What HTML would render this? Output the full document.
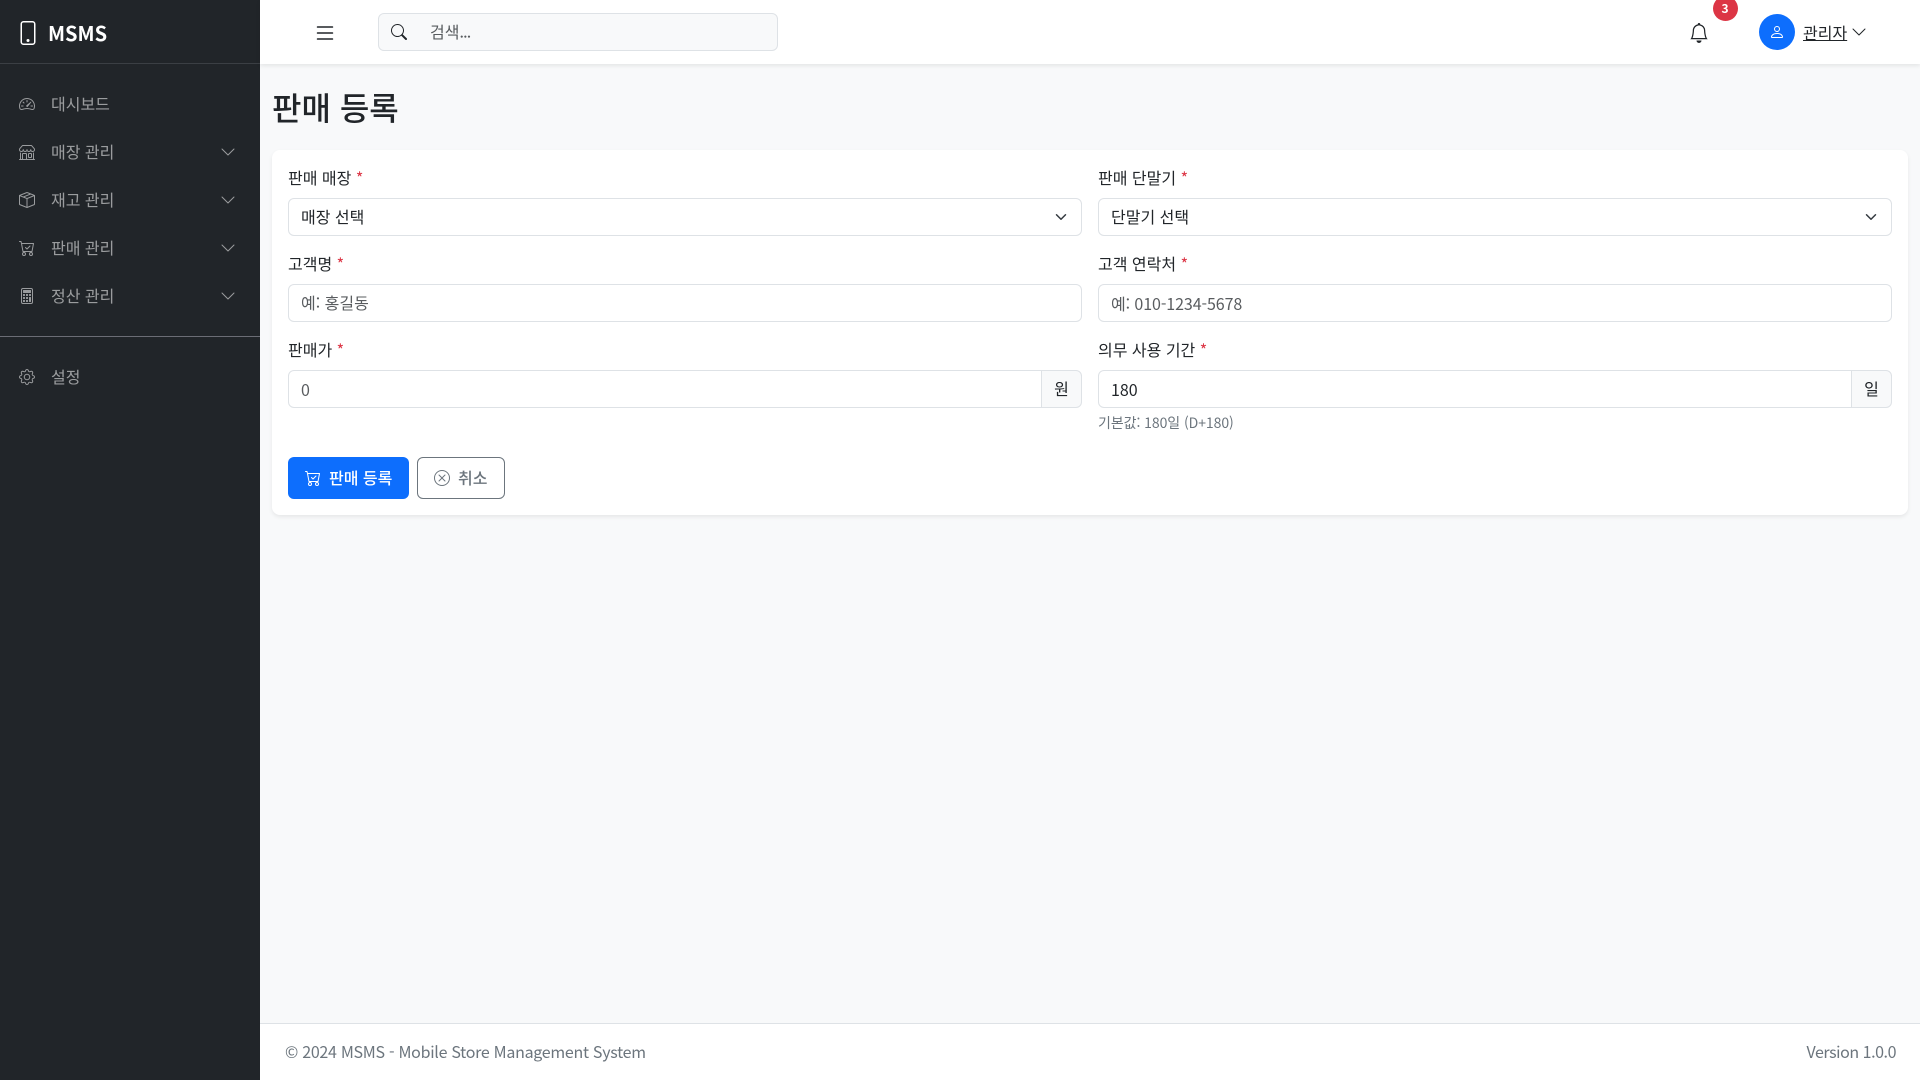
<!DOCTYPE html>
<html lang="ko"><head><meta charset="utf-8"><title>판매 등록</title>
<style>
*{box-sizing:border-box;margin:0;padding:0}
html,body{width:1920px;height:1080px;overflow:hidden}
body{position:relative;background:#f8f9fa;font-family:"Liberation Sans","Noto Sans CJK KR",sans-serif;font-size:16px;color:#212529}
.a{position:absolute;white-space:nowrap;line-height:24px}
.k{font-family:"Noto Sans CJK KR",sans-serif}
svg{position:absolute;display:block;fill:currentColor}
#side{position:absolute;left:0;top:0;width:260px;height:1080px;background:#212529}
#head{position:absolute;left:260px;top:0;width:1660px;height:64px;background:#fff;box-shadow:0 2px 4px rgba(0,0,0,.08)}
#card{position:absolute;left:272px;top:150px;width:1636px;height:365px;background:#fff;border-radius:8px;box-shadow:0 2px 4px rgba(0,0,0,.075)}
#foot{position:absolute;left:260px;top:1023px;width:1660px;height:57px;background:#fff;border-top:1px solid #dee2e6}
.nav{color:rgba(255,255,255,.55)}
.inp{position:absolute;height:38px;background:#fff;border:1px solid #dee2e6;border-radius:6px}
.add{position:absolute;height:38px;width:41px;background:#f8f9fa;border:1px solid #dee2e6;border-radius:0 6px 6px 0;text-align:center;line-height:35px}
.ph{color:rgba(33,37,41,.75)}
.req{color:#dc3545}
</style></head><body>
<svg width="0" height="0" style="position:absolute"><defs>
<symbol id="chev" viewBox="0 0 16 16"><path fill-rule="evenodd" d="M1.646 4.646a.5.5 0 0 1 .708 0L8 10.293l5.646-5.647a.5.5 0 0 1 .708.708l-6 6a.5.5 0 0 1-.708 0l-6-6a.5.5 0 0 1 0-.708"/></symbol>
<symbol id="cart" viewBox="0 0 16 16"><path d="M11.354 6.354a.5.5 0 0 0-.708-.708L8 8.293 6.854 7.146a.5.5 0 1 0-.708.708l1.5 1.5a.5.5 0 0 0 .708 0z"/><path d="M.5 1a.5.5 0 0 0 0 1h1.11l.401 1.607 1.498 7.985A.5.5 0 0 0 4 12h1a2 2 0 1 0 0 4 2 2 0 0 0 0-4h7a2 2 0 1 0 0 4 2 2 0 0 0 0-4h1a.5.5 0 0 0 .491-.408l1.5-8A.5.5 0 0 0 14.5 3H2.89l-.405-1.621A.5.5 0 0 0 2 1zm3.915 10L3.102 4h10.796l-1.313 7zM6 14a1 1 0 1 1-2 0 1 1 0 0 1 2 0m7 0a1 1 0 1 1-2 0 1 1 0 0 1 2 0"/></symbol>
</defs></svg>

<div id="side">
<div style="position:absolute;left:0;top:63px;width:260px;height:1px;background:#3b3f44"></div>
<svg style="left:16px;top:21px;color:#fff" width="24" height="24" viewBox="0 0 16 16"><path d="M11 1a1 1 0 0 1 1 1v12a1 1 0 0 1-1 1H5a1 1 0 0 1-1-1V2a1 1 0 0 1 1-1zM5 0a2 2 0 0 0-2 2v12a2 2 0 0 0 2 2h6a2 2 0 0 0 2-2V2a2 2 0 0 0-2-2z"/><path d="M8 14a1 1 0 1 0 0-2 1 1 0 0 0 0 2"/></svg>
<div class="a k" style="left:48px;top:21px;font-size:20px;font-weight:700;color:#fff">MSMS</div>

<svg class="nav" style="left:19px;top:96px" width="16" height="16" viewBox="0 0 16 16"><path d="M8 4a.5.5 0 0 1 .5.5V6a.5.5 0 0 1-1 0V4.5A.5.5 0 0 1 8 4M3.732 5.732a.5.5 0 0 1 .707 0l.915.914a.5.5 0 1 1-.708.708l-.914-.915a.5.5 0 0 1 0-.707M2 10a.5.5 0 0 1 .5-.5h1.586a.5.5 0 0 1 0 1H2.5A.5.5 0 0 1 2 10m9.5 0a.5.5 0 0 1 .5-.5h1.5a.5.5 0 0 1 0 1H12a.5.5 0 0 1-.5-.5m.754-4.246a.39.39 0 0 0-.527-.02L7.547 9.31a.91.91 0 1 0 1.302 1.258l3.434-4.297a.39.39 0 0 0-.029-.518z"/><path fill-rule="evenodd" d="M0 10a8 8 0 1 1 15.547 2.661c-.442 1.253-1.845 1.602-2.932 1.25C11.309 13.488 9.475 13 8 13c-1.474 0-3.31.488-4.615.911-1.087.352-2.49.003-2.932-1.25A8 8 0 0 1 0 10m8-7a7 7 0 0 0-6.603 9.329c.203.575.923.876 1.68.63C4.397 12.533 6.358 12 8 12s3.604.532 4.923.96c.757.245 1.477-.056 1.68-.631A7 7 0 0 0 8 3"/></svg>
<div class="a k nav" style="left:51px;top:91px">대시보드</div>

<svg class="nav" style="left:19px;top:144px" width="16" height="16" viewBox="0 0 16 16"><path d="M2.97 1.35A1 1 0 0 1 3.73 1h8.54a1 1 0 0 1 .76.35l2.609 3.044A1.5 1.5 0 0 1 16 5.37v.255a2.375 2.375 0 0 1-4.25 1.458A2.37 2.37 0 0 1 9.875 8 2.37 2.37 0 0 1 8 7.083 2.37 2.37 0 0 1 6.125 8a2.37 2.37 0 0 1-1.875-.917A2.375 2.375 0 0 1 0 5.625V5.37a1.5 1.5 0 0 1 .361-.976zm1.78 4.275a1.375 1.375 0 0 0 2.75 0 .5.5 0 0 1 1 0 1.375 1.375 0 0 0 2.75 0 .5.5 0 0 1 1 0 1.375 1.375 0 1 0 2.75 0V5.37a.5.5 0 0 0-.12-.325L12.27 2H3.73L1.12 5.045A.5.5 0 0 0 1 5.37v.255a1.375 1.375 0 0 0 2.75 0 .5.5 0 0 1 1 0M1.5 8.5A.5.5 0 0 1 2 9v6h1v-5a1 1 0 0 1 1-1h3a1 1 0 0 1 1 1v5h6V9a.5.5 0 0 1 1 0v6h.5a.5.5 0 0 1 0 1H.5a.5.5 0 0 1 0-1H1V9a.5.5 0 0 1 .5-.5M4 15h3v-5H4zm5-5a1 1 0 0 1 1-1h2a1 1 0 0 1 1 1v3a1 1 0 0 1-1 1h-2a1 1 0 0 1-1-1zm3 0h-2v3h2z"/></svg>
<div class="a k nav" style="left:51px;top:139px">매장 관리</div>
<svg class="nav" style="left:220px;top:144px" width="16" height="16"><use href="#chev"/></svg>

<svg class="nav" style="left:19px;top:192px" width="16" height="16" viewBox="0 0 16 16"><path d="M8.186 1.113a.5.5 0 0 0-.372 0L1.846 3.5l2.404.961L10.404 2zm3.564 1.426L5.596 5 8 5.961 14.154 3.5zm3.25 1.7-6.5 2.6v7.922l6.5-2.6V4.24zM7.5 14.762V6.838L1 4.239v7.925zM7.443.184a1.5 1.5 0 0 1 1.114 0l7.129 2.852A.5.5 0 0 1 16 3.5v8.662a1 1 0 0 1-.629.928l-7.185 2.874a.5.5 0 0 1-.372 0L.63 13.09a1 1 0 0 1-.63-.928V3.5a.5.5 0 0 1 .314-.464z"/></svg>
<div class="a k nav" style="left:51px;top:187px">재고 관리</div>
<svg class="nav" style="left:220px;top:192px" width="16" height="16"><use href="#chev"/></svg>

<svg class="nav" style="left:19px;top:240px" width="16" height="16"><use href="#cart"/></svg>
<div class="a k nav" style="left:51px;top:235px">판매 관리</div>
<svg class="nav" style="left:220px;top:240px" width="16" height="16"><use href="#chev"/></svg>

<svg class="nav" style="left:19px;top:288px" width="16" height="16" viewBox="0 0 16 16"><path d="M12 1a1 1 0 0 1 1 1v12a1 1 0 0 1-1 1H4a1 1 0 0 1-1-1V2a1 1 0 0 1 1-1zM4 0a2 2 0 0 0-2 2v12a2 2 0 0 0 2 2h8a2 2 0 0 0 2-2V2a2 2 0 0 0-2-2z"/><path d="M4 2.5a.5.5 0 0 1 .5-.5h7a.5.5 0 0 1 .5.5v2a.5.5 0 0 1-.5.5h-7a.5.5 0 0 1-.5-.5zm0 4a.5.5 0 0 1 .5-.5h1a.5.5 0 0 1 .5.5v1a.5.5 0 0 1-.5.5h-1a.5.5 0 0 1-.5-.5zm0 3a.5.5 0 0 1 .5-.5h1a.5.5 0 0 1 .5.5v1a.5.5 0 0 1-.5.5h-1a.5.5 0 0 1-.5-.5zm0 3a.5.5 0 0 1 .5-.5h1a.5.5 0 0 1 .5.5v1a.5.5 0 0 1-.5.5h-1a.5.5 0 0 1-.5-.5zm3-6a.5.5 0 0 1 .5-.5h1a.5.5 0 0 1 .5.5v1a.5.5 0 0 1-.5.5h-1a.5.5 0 0 1-.5-.5zm0 3a.5.5 0 0 1 .5-.5h1a.5.5 0 0 1 .5.5v1a.5.5 0 0 1-.5.5h-1a.5.5 0 0 1-.5-.5zm0 3a.5.5 0 0 1 .5-.5h1a.5.5 0 0 1 .5.5v1a.5.5 0 0 1-.5.5h-1a.5.5 0 0 1-.5-.5zm3-6a.5.5 0 0 1 .5-.5h1a.5.5 0 0 1 .5.5v1a.5.5 0 0 1-.5.5h-1a.5.5 0 0 1-.5-.5zm0 3a.5.5 0 0 1 .5-.5h1a.5.5 0 0 1 .5.5v4a.5.5 0 0 1-.5.5h-1a.5.5 0 0 1-.5-.5z"/></svg>
<div class="a k nav" style="left:51px;top:283px">정산 관리</div>
<svg class="nav" style="left:220px;top:288px" width="16" height="16"><use href="#chev"/></svg>

<div style="position:absolute;left:0;top:336px;width:260px;height:1px;background:#6b6d75"></div>

<svg class="nav" style="left:19px;top:369px" width="16" height="16" viewBox="0 0 16 16"><path d="M8 4.754a3.246 3.246 0 1 0 0 6.492 3.246 3.246 0 0 0 0-6.492M5.754 8a2.246 2.246 0 1 1 4.492 0 2.246 2.246 0 0 1-4.492 0"/><path d="M9.796 1.343c-.527-1.79-3.065-1.79-3.592 0l-.094.319a.873.873 0 0 1-1.255.52l-.292-.16c-1.64-.892-3.433.902-2.54 2.541l.159.292a.873.873 0 0 1-.52 1.255l-.319.094c-1.79.527-1.79 3.065 0 3.592l.319.094a.873.873 0 0 1 .52 1.255l-.16.292c-.892 1.64.901 3.434 2.541 2.54l.292-.159a.873.873 0 0 1 1.255.52l.094.319c.527 1.79 3.065 1.79 3.592 0l.094-.319a.873.873 0 0 1 1.255-.52l.292.16c1.64.893 3.434-.902 2.54-2.541l-.159-.292a.873.873 0 0 1 .52-1.255l.319-.094c1.79-.527 1.79-3.065 0-3.592l-.319-.094a.873.873 0 0 1-.52-1.255l.16-.292c.893-1.64-.902-3.433-2.541-2.54l-.292.159a.873.873 0 0 1-1.255-.52zm-2.633.283c.246-.835 1.428-.835 1.674 0l.094.319a1.873 1.873 0 0 0 2.693 1.115l.291-.16c.764-.415 1.6.42 1.184 1.185l-.159.292a1.873 1.873 0 0 0 1.116 2.692l.318.094c.835.246.835 1.428 0 1.674l-.319.094a1.873 1.873 0 0 0-1.115 2.693l.16.291c.415.764-.42 1.6-1.185 1.184l-.291-.159a1.873 1.873 0 0 0-2.693 1.116l-.094.318c-.246.835-1.428.835-1.674 0l-.094-.319a1.873 1.873 0 0 0-2.692-1.115l-.292.16c-.764.415-1.6-.42-1.184-1.185l.159-.291A1.873 1.873 0 0 0 1.945 8.93l-.319-.094c-.835-.246-.835-1.428 0-1.674l.319-.094A1.873 1.873 0 0 0 3.06 4.377l-.16-.292c-.415-.764.42-1.6 1.185-1.184l.292.159a1.873 1.873 0 0 0 2.692-1.115z"/></svg>
<div class="a k nav" style="left:51px;top:364px">설정</div>
</div>

<div id="head"></div>
<svg style="left:313px;top:21px;color:#212529" width="24" height="24" viewBox="0 0 16 16"><path fill-rule="evenodd" d="M2.5 12a.5.5 0 0 1 .5-.5h10a.5.5 0 0 1 0 1H3a.5.5 0 0 1-.5-.5m0-4a.5.5 0 0 1 .5-.5h10a.5.5 0 0 1 0 1H3a.5.5 0 0 1-.5-.5m0-4a.5.5 0 0 1 .5-.5h10a.5.5 0 0 1 0 1H3a.5.5 0 0 1-.5-.5"/></svg>
<div style="position:absolute;left:378px;top:13px;width:400px;height:38px;background:#f8f9fa;border:1px solid #dee2e6;border-radius:6px"></div>
<svg style="left:391px;top:24px;color:#212529" width="16" height="16" viewBox="0 0 16 16"><path d="M11.742 10.344a6.5 6.5 0 1 0-1.397 1.398h-.001q.044.06.098.115l3.85 3.85a1 1 0 0 0 1.415-1.414l-3.85-3.85a1 1 0 0 0-.115-.1zM12 6.5a5.5 5.5 0 1 1-11 0 5.5 5.5 0 0 1 11 0"/></svg>
<div class="a k ph" style="left:430px;top:19px">검색<span style="letter-spacing:-.8px">...</span></div>

<svg style="left:1689px;top:23px;color:#212529" width="20" height="20" viewBox="0 0 16 16"><path d="M8 16a2 2 0 0 0 2-2H6a2 2 0 0 0 2 2M8 1.918l-.797.161A4 4 0 0 0 4 6c0 .628-.134 2.197-.459 3.742-.16.767-.376 1.566-.663 2.258h10.244c-.287-.692-.502-1.49-.663-2.258C12.134 8.197 12 6.628 12 6a4 4 0 0 0-3.203-3.92zM14.22 12c.223.447.481.801.78 1H1c.299-.199.557-.553.78-1C2.68 10.2 3 6.88 3 6c0-2.42 1.72-4.44 4.005-4.901a1 1 0 1 1 1.99 0A5 5 0 0 1 13 6c0 .88.32 4.2 1.22 6"/></svg>
<div style="position:absolute;left:1712.5px;top:-4px;width:25px;height:25px;border-radius:50%;background:#dc3545;color:#fff;font-size:12px;font-weight:700;text-align:center;line-height:26px" class="k">3</div>
<div style="position:absolute;left:1759px;top:14px;width:36px;height:36px;border-radius:50%;background:#0d6efd"></div>
<svg style="left:1769px;top:24px;color:#fff" width="16" height="16" viewBox="0 0 16 16"><path d="M8 8a3 3 0 1 0 0-6 3 3 0 0 0 0 6m2-3a2 2 0 1 1-4 0 2 2 0 0 1 4 0m4 8c0 1-1 1-1 1H3s-1 0-1-1 1-4 6-4 6 3 6 4m-1-.004c-.001-.246-.154-.986-.832-1.664C11.516 10.68 10.289 10 8 10s-3.516.68-4.168 1.332c-.678.678-.83 1.418-.832 1.664z"/></svg>
<div class="a k" style="left:1803px;top:20px;text-decoration:underline">관리자</div>
<svg style="left:1851px;top:24px;color:#212529" width="16" height="16"><use href="#chev"/></svg>

<div class="a k" style="left:272px;top:83px;font-size:32px;font-weight:500;line-height:48px">판매 등록</div>

<div id="card"></div>

<div class="a k" style="left:288px;top:165px">판매 매장 <span class="req">*</span></div>
<div class="inp" style="left:288px;top:198px;width:794px"></div>
<div class="a k" style="left:301px;top:204px">매장 선택</div>
<svg style="left:1055px;top:211px;fill:none" width="12" height="12" viewBox="0 0 16 16"><path d="M2 5l6 6 6-6" fill="none" stroke="#343a40" stroke-width="2" stroke-linecap="round" stroke-linejoin="round"/></svg>

<div class="a k" style="left:1098px;top:165px">판매 단말기 <span class="req">*</span></div>
<div class="inp" style="left:1098px;top:198px;width:794px"></div>
<div class="a k" style="left:1111px;top:204px">단말기 선택</div>
<svg style="left:1865px;top:211px;fill:none" width="12" height="12" viewBox="0 0 16 16"><path d="M2 5l6 6 6-6" fill="none" stroke="#343a40" stroke-width="2" stroke-linecap="round" stroke-linejoin="round"/></svg>

<div class="a k" style="left:288px;top:251px">고객명 <span class="req">*</span></div>
<div class="inp" style="left:288px;top:284px;width:794px"></div>
<div class="a k ph" style="left:301px;top:290px">예: 홍길동</div>

<div class="a k" style="left:1098px;top:251px">고객 연락처 <span class="req">*</span></div>
<div class="inp" style="left:1098px;top:284px;width:794px"></div>
<div class="a k ph" style="left:1111px;top:291px;letter-spacing:-.08px">예: 010-1234-5678</div>

<div class="a k" style="left:288px;top:337px">판매가 <span class="req">*</span></div>
<div class="inp" style="left:288px;top:370px;width:754px;border-radius:6px 0 0 6px"></div>
<div class="add k" style="left:1041px;top:370px">원</div>
<div class="a k ph" style="left:301px;top:377px">0</div>

<div class="a k" style="left:1098px;top:337px">의무 사용 기간 <span class="req">*</span></div>
<div class="inp" style="left:1098px;top:370px;width:754px;border-radius:6px 0 0 6px"></div>
<div class="add k" style="left:1851px;top:370px">일</div>
<div class="a k" style="left:1111px;top:377px">180</div>
<div class="a k" style="left:1098px;top:413px;font-size:14px;line-height:21px;color:#6c757d;letter-spacing:-.06px">기본값: 180일 (D+180)</div>

<div style="position:absolute;left:288px;top:457px;width:121px;height:42px;background:#0d6efd;border-radius:6px"></div>
<svg style="left:305px;top:470px;color:#fff" width="16" height="16"><use href="#cart"/></svg>
<div class="a k" style="left:329px;top:465px;color:#fff;font-weight:500">판매 등록</div>

<div style="position:absolute;left:417px;top:457px;width:88px;height:42px;background:#fff;border:1px solid #6c757d;border-radius:6px"></div>
<svg style="left:434px;top:470px;color:#6c757d" width="16" height="16" viewBox="0 0 16 16"><path d="M8 15A7 7 0 1 1 8 1a7 7 0 0 1 0 14m0 1A8 8 0 1 0 8 0a8 8 0 0 0 0 16"/><path d="M4.646 4.646a.5.5 0 0 1 .708 0L8 7.293l2.646-2.647a.5.5 0 0 1 .708.708L8.707 8l2.647 2.646a.5.5 0 0 1-.708.708L8 8.707l-2.646 2.647a.5.5 0 0 1-.708-.708L7.293 8 4.646 5.354a.5.5 0 0 1 0-.708"/></svg>
<div class="a k" style="left:458px;top:465px;color:#6c757d;font-weight:500">취소</div>

<div id="foot"></div>
<div class="a k" style="left:285px;top:1039px;color:#6c757d;letter-spacing:-.28px">© 2024 MSMS - Mobile Store Management System</div>
<div class="a k" style="right:24px;top:1039px;color:#6c757d;letter-spacing:-.45px">Version 1.0.0</div>
</body></html>
